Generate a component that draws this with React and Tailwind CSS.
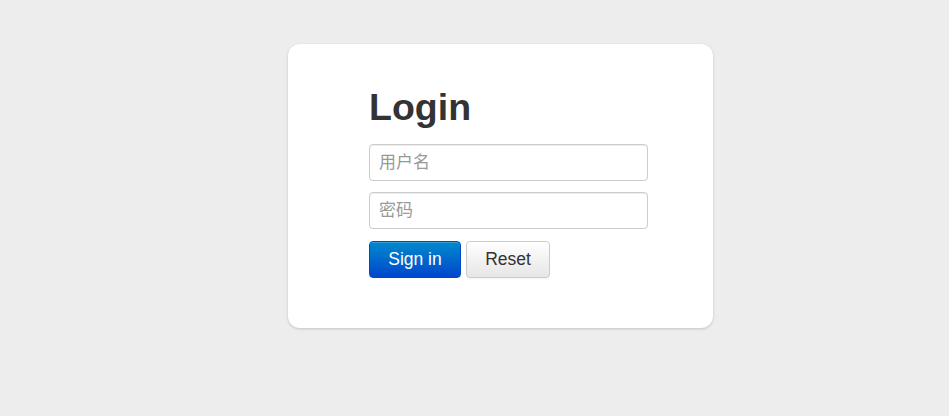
export default function App() {
    return (
        <div className="min-h-screen w-full bg-[#ededed] pt-[44px] font-['Liberation_Sans','Noto_Sans_CJK_SC',sans-serif]">
            <div className="ml-[288px] w-[425px] h-[284px] bg-white rounded-[12px] shadow-[0_1px_3px_rgba(0,0,0,0.18)] pt-[43px] pl-[81px]">
                <h1 className="text-[37.5px] leading-[40px] font-bold text-[#333]">Login</h1>

                <form className="mt-[17px] flex flex-col">
                    <input
                        type="text"
                        placeholder="用户名"
                        className="w-[279px] h-[37px] border border-[#ccc] rounded-[4px] px-[9px] text-[17px] text-[#555] placeholder:text-[#999] outline-none shadow-[inset_0_1px_1px_rgba(0,0,0,0.075)]"
                    />
                    <input
                        type="password"
                        placeholder="密码"
                        className="mt-[11px] w-[279px] h-[37px] border border-[#ccc] rounded-[4px] px-[9px] text-[17px] text-[#555] placeholder:text-[#999] outline-none shadow-[inset_0_1px_1px_rgba(0,0,0,0.075)]"
                    />

                    <div className="mt-[12px] flex gap-[5px]">
                        <button
                            type="button"
                            className="w-[92px] h-[37px] rounded-[4px] border border-[#0048c8] bg-gradient-to-b from-[#0088cc] to-[#0044cc] text-white text-[17.5px] shadow-[inset_0_1px_0_rgba(255,255,255,0.2)]"
                        >
                            Sign in
                        </button>
                        <button
                            type="reset"
                            className="w-[84px] h-[37px] rounded-[4px] border border-[#ccc] bg-gradient-to-b from-white to-[#e6e6e6] text-[#333] text-[17.5px] shadow-[0_1px_2px_rgba(0,0,0,0.05)]"
                        >
                            Reset
                        </button>
                    </div>
                </form>
            </div>
        </div>
    )
}
